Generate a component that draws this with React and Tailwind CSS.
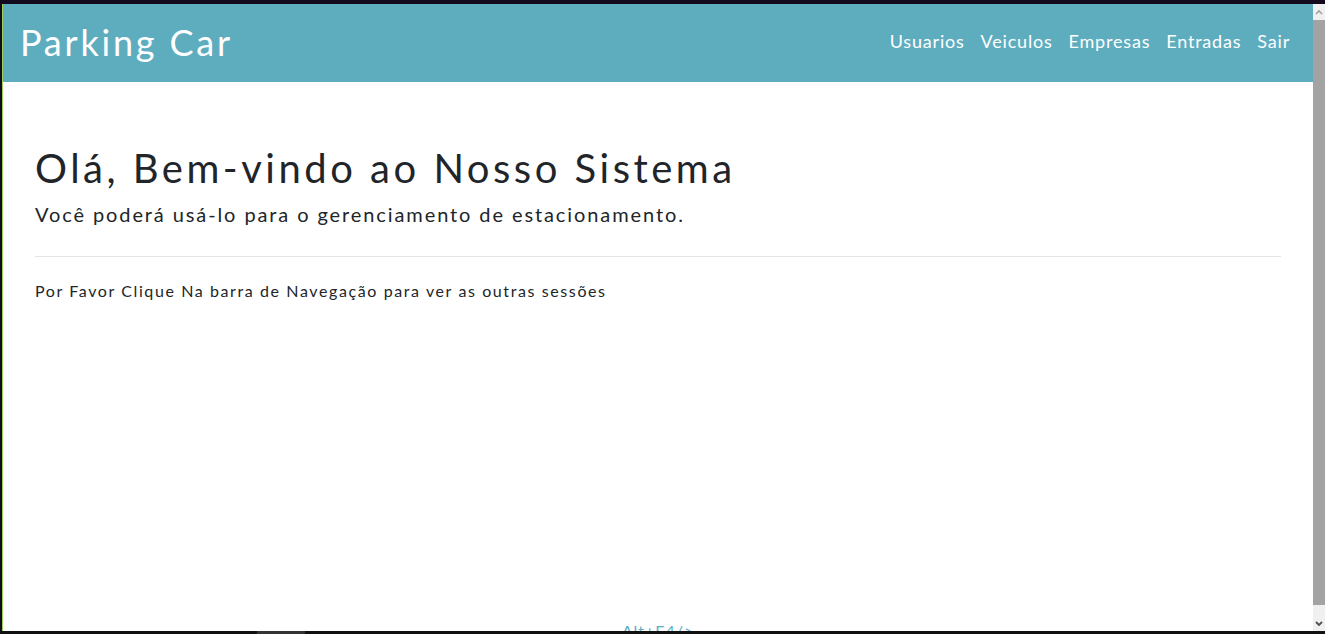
import React from 'react';

const links = ['Usuarios', 'Veiculos', 'Empresas', 'Entradas', 'Sair'];

export default function App() {
  return (
    <div className="h-screen flex flex-col bg-[#140a1e] overflow-hidden font-['Lato','Liberation_Sans',sans-serif]">
      <div className="h-[4px] shrink-0" />
      <div className="flex flex-1 min-h-0">
        {/* window edge */}
        <div className="w-[2px] shrink-0 bg-[#140a1e]" />
        <div className="w-[1px] shrink-0 bg-[#9bd35a]" />

        {/* page */}
        <div className="flex-1 flex flex-col bg-white min-w-0">
          <nav className="h-[78px] shrink-0 bg-[#5dadbf] flex items-center justify-between pl-[17px] pr-[23px] pb-[3px]">
            <a href="#" className="text-white text-[36px] tracking-[2.8px]">Parking Car</a>
            <ul className="flex items-center gap-4 text-white text-[18px] tracking-[0.8px]">
              {links.map((l) => (
                <li key={l}>
                  <a href="#">{l}</a>
                </li>
              ))}
            </ul>
          </nav>

          <main className="flex-1 flex flex-col px-8 pt-[62px] text-[#212529]">
            <h1 className="text-[40px] leading-[48px] tracking-[3.5px]">Olá, Bem-vindo ao Nosso Sistema</h1>
            <p className="text-[20px] leading-[30px] mt-[7px] tracking-[1.9px]">Você poderá usá-lo para o gerenciamento de estacionamento.</p>
            <hr className="border-t border-[#e5e5e5] mt-[27px]" />
            <p className="text-[16px] mt-[22px] tracking-[1.6px]">Por Favor Clique Na barra de Navegação para ver as outras sessões</p>
            <div className="flex-1" />
            <footer className="text-center text-[16px] text-[#5dadbf] leading-none h-[7px] overflow-hidden">
              <span className="relative top-[-1px] tracking-[1px]">Alt+F4/&gt;</span>
            </footer>
          </main>
        </div>

        {/* scrollbar */}
        <div className="w-[12px] shrink-0 flex flex-col bg-[#f0f0f0]">
          <div className="h-[16px] flex items-center justify-center">
            <svg width="8" height="6" viewBox="0 0 8 6"><path d="M1 5 L4 2 L7 5" fill="none" stroke="#a3a3a3" strokeWidth="1.6" /></svg>
          </div>
          <div className="flex-1 bg-[#a3a3a3]" />
          <div className="h-[26px] flex items-end justify-center pb-[4px]">
            <svg width="8" height="6" viewBox="0 0 8 6"><path d="M1 1 L4 4 L7 1" fill="none" stroke="#505050" strokeWidth="1.8" /></svg>
          </div>
        </div>
      </div>

      {/* bottom bar */}
      <div className="h-[3px] shrink-0 bg-[#111] flex">
        <div className="w-[257px]" />
        <div className="w-[48px] bg-[#333]" />
      </div>
    </div>
  );
}
